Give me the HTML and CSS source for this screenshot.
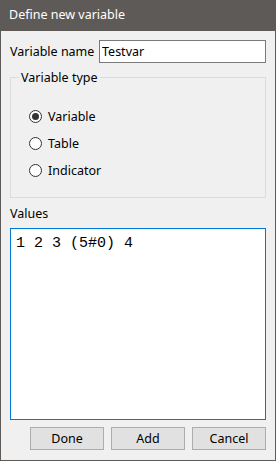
FILE: index.html
```html
<!DOCTYPE html>
<html lang="en">
<head>
  <meta charset="UTF-8">
  <title>Define new variable</title>
  <link rel="stylesheet" href="styles.css">
</head>
<body>
  <div class="window">
    <div class="titlebar">Define new variable</div>
    <div class="content">
      <div class="name-row">
        <label for="varname">Variable name</label>
        <input type="text" id="varname" value="Testvar">
      </div>
      <div class="groupbox">
        <span class="legend">Variable type</span>
        <div class="radio checked"><span class="dot"></span>Variable</div>
        <div class="radio"><span class="dot"></span>Table</div>
        <div class="radio"><span class="dot"></span>Indicator</div>
      </div>
      <div class="values-label">Values</div>
      <div class="values">1 2 3 (5#0) 4</div>
      <div class="buttons">
        <button>Done</button>
        <button>Add</button>
        <button>Cancel</button>
      </div>
    </div>
  </div>
</body>
</html>
```
FILE: styles.css
```css
body {
  margin: 0;
  font-family: "Noto Sans", "Open Sans", sans-serif;
  font-size: 12.5px;
  color: #000;
}
.window {
  width: 274px;
  height: 460px;
  border: 1px solid #5e5a57;
  border-top: none;
  background: #f0f0f0;
  display: flex;
  flex-direction: column;
}
.titlebar {
  height: 31px;
  line-height: 30px;
  background: #5e5a57;
  color: #fff;
  padding-left: 8px;
}
.content {
  padding: 0 9px 0 9px;
  flex: 1;
  display: flex;
  flex-direction: column;
}
.name-row {
  display: flex;
  align-items: center;
  justify-content: space-between;
  margin-top: 9px;
  height: 23px;
}
.name-row input {
  width: 161px;
  height: 19px;
  border: 1px solid #7a7a7a;
  padding: 1px 2px;
  font-family: inherit;
  font-size: 12.5px;
  outline: none;
}
.groupbox {
  position: relative;
  margin-top: 14px;
  height: 121px;
  border: 1px solid #dcdcdc;
  padding: 29px 0 0 18px;
  box-sizing: border-box;
  display: flex;
  flex-direction: column;
  gap: 9px;
}
.legend {
  position: absolute;
  top: -9px;
  left: 8px;
  padding: 0 2px;
  background: #f0f0f0;
}
.radio {
  display: flex;
  align-items: center;
  gap: 6px;
  height: 18px;
}
.radio .dot {
  width: 11px;
  height: 11px;
  border: 1px solid #333;
  border-radius: 50%;
  background: #fff;
  display: flex;
  align-items: center;
  justify-content: center;
}
.radio.checked .dot::after {
  content: "";
  width: 7px;
  height: 7px;
  border-radius: 50%;
  background: #333;
}
.values-label {
  margin-top: 6px;
  height: 24px;
  line-height: 20px;
}
.values {
  height: 192px;
  border: 1px solid #0078d7;
  background: #fff;
  padding: 4px 5px;
  box-sizing: border-box;
  font-family: "Liberation Mono", "DejaVu Sans Mono", monospace;
  font-size: 15px;
  line-height: 22px;
}
.buttons {
  display: flex;
  justify-content: flex-end;
  gap: 7px;
  margin-top: 7px;
}
.buttons button {
  width: 74px;
  height: 23px;
  border: 1px solid #adadad;
  background: #e1e1e1;
  font-family: inherit;
  font-size: 12.5px;
  padding: 0;
}
```
